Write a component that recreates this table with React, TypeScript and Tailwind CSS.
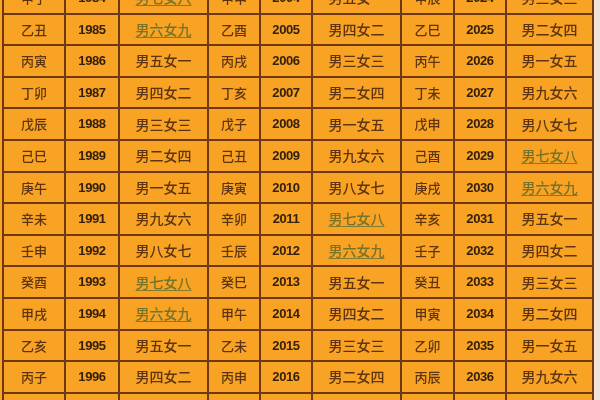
const rows: string[][] = [
  ["甲子", "1984", "男七女八", "甲申", "2004", "男五女一", "甲辰", "2024", "男三女三"],
  ["乙丑", "1985", "男六女九", "乙酉", "2005", "男四女二", "乙巳", "2025", "男二女四"],
  ["丙寅", "1986", "男五女一", "丙戌", "2006", "男三女三", "丙午", "2026", "男一女五"],
  ["丁卯", "1987", "男四女二", "丁亥", "2007", "男二女四", "丁未", "2027", "男九女六"],
  ["戊辰", "1988", "男三女三", "戊子", "2008", "男一女五", "戊申", "2028", "男八女七"],
  ["己巳", "1989", "男二女四", "己丑", "2009", "男九女六", "己酉", "2029", "男七女八"],
  ["庚午", "1990", "男一女五", "庚寅", "2010", "男八女七", "庚戌", "2030", "男六女九"],
  ["辛未", "1991", "男九女六", "辛卯", "2011", "男七女八", "辛亥", "2031", "男五女一"],
  ["壬申", "1992", "男八女七", "壬辰", "2012", "男六女九", "壬子", "2032", "男四女二"],
  ["癸酉", "1993", "男七女八", "癸巳", "2013", "男五女一", "癸丑", "2033", "男三女三"],
  ["甲戌", "1994", "男六女九", "甲午", "2014", "男四女二", "甲寅", "2034", "男二女四"],
  ["乙亥", "1995", "男五女一", "乙未", "2015", "男三女三", "乙卯", "2035", "男一女五"],
  ["丙子", "1996", "男四女二", "丙申", "2016", "男二女四", "丙辰", "2036", "男九女六"],
  ["丁丑", "1997", "男三女三", "丁酉", "2017", "男一女五", "丁巳", "2037", "男八女七"],
];

const marked = (t: string) => t === "男七女八" || t === "男六女九";

function Cell({ text, col }: { text: string; col: number }) {
  const isYear = col % 3 === 1;
  const isCount = col % 3 === 2;
  let cls = "text-[13px] font-medium text-[#5e3410]";
  if (isYear) cls = "text-[13px] font-bold tracking-[-0.4px] text-[#35200c] [font-family:'Liberation_Sans',sans-serif]";
  if (isCount) cls = "text-[14px] font-medium text-[#5e3410]";
  if (isCount && marked(text)) cls = "text-[14px] font-medium text-[#76722a] underline decoration-[#857b30] underline-offset-2";
  return (
    <div className="flex items-center justify-center bg-[#f8a323]">
      <span className={cls}>{text}</span>
    </div>
  );
}

export default function App() {
  return (
    <div className="flex h-[400px] w-[600px] overflow-hidden bg-[#f1e4d6] [font-family:'Noto_Sans_CJK_SC',sans-serif]">
      <div className="w-[2px] shrink-0 bg-[#f8a323]" />
      <div className="-mt-[19px] grid h-fit grid-cols-[60px_52px_87px_50px_50px_87px_51px_50px_85px] auto-rows-[29.6px] gap-[2px] bg-[#6e3812] px-[2px] py-[2px] blur-[0.5px]">
        {rows.map((r, i) =>
          r.map((t, j) => <Cell key={`${i}-${j}`} text={t} col={j} />)
        )}
      </div>
    </div>
  );
}
